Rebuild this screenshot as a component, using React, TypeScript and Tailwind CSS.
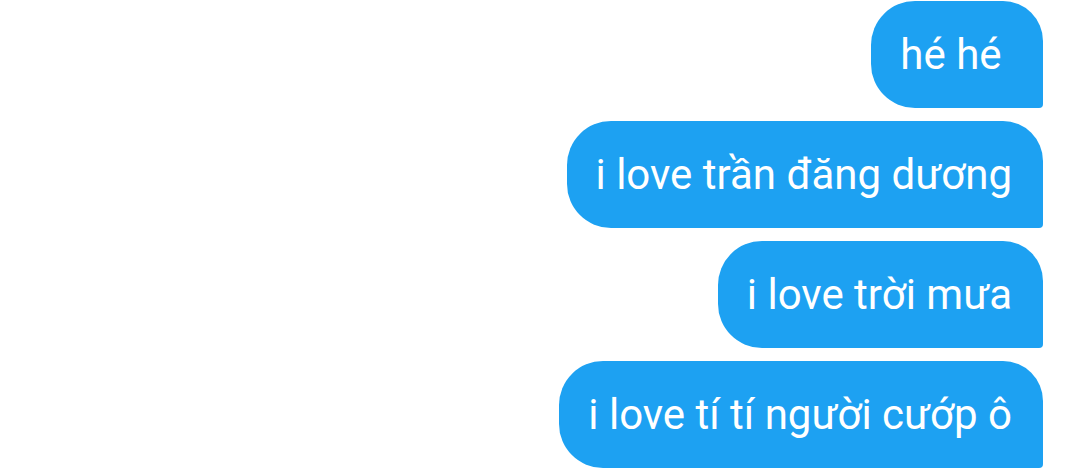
const messages = ["hé hé ", "i love trần đăng dương", "i love trời mưa", "i love tí tí người cướp ô"]

export default function App() {
  return (
    <div className="w-[1080px] h-[475px] bg-white overflow-hidden font-['Roboto','Noto_Sans',sans-serif]">
      <div className="flex flex-col items-end gap-[13px] pt-[1px] pr-[37px]">
        {messages.map((m) => (
          <div
            key={m}
            className="h-[107px] flex items-center pl-[29px] pr-[31px] bg-[#1da1f2] text-white text-[42px] whitespace-pre rounded-tl-[44px] rounded-tr-[40px] rounded-bl-[44px] rounded-br-[4px]"
          >
            {m}
          </div>
        ))}
      </div>
    </div>
  )
}
